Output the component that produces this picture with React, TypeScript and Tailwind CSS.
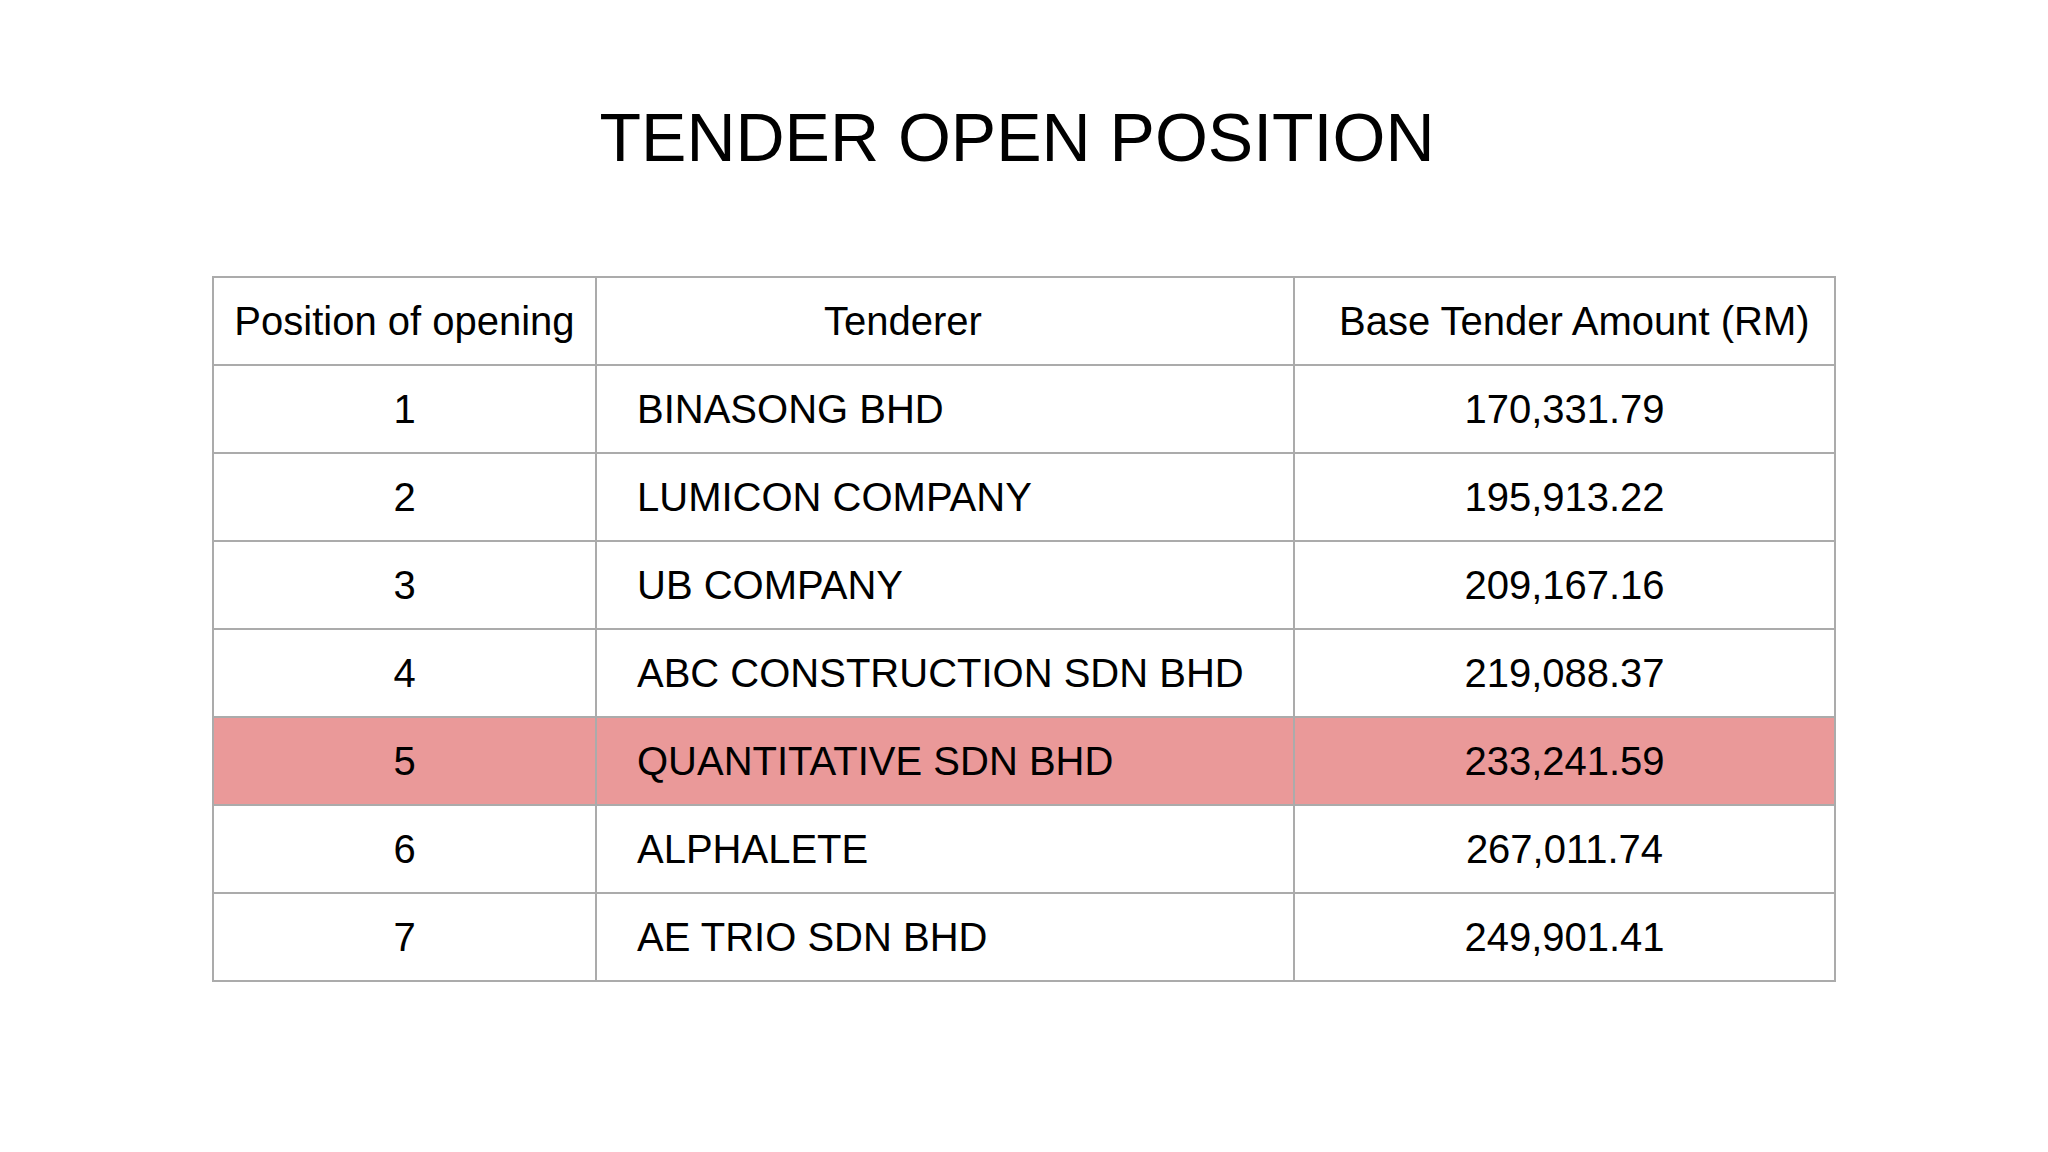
import React from "react";

const rows = [
  { pos: "1", name: "BINASONG BHD", amt: "170,331.79" },
  { pos: "2", name: "LUMICON COMPANY", amt: "195,913.22" },
  { pos: "3", name: "UB COMPANY", amt: "209,167.16" },
  { pos: "4", name: "ABC CONSTRUCTION SDN BHD", amt: "219,088.37" },
  { pos: "5", name: "QUANTITATIVE SDN BHD", amt: "233,241.59", hl: true },
  { pos: "6", name: "ALPHALETE", amt: "267,011.74" },
  { pos: "7", name: "AE TRIO SDN BHD", amt: "249,901.41" },
];

export default function App() {
  return (
    <div
      className="w-[2048px] h-[1152px] bg-white text-black flex flex-col items-center"
      style={{ fontFamily: '"Liberation Sans", Arial, sans-serif' }}
    >
      <h1 className="mt-[103px] h-[68px] pr-[14px] text-[68px] leading-none font-normal whitespace-nowrap">
        TENDER OPEN POSITION
      </h1>
      <div className="mt-[105px] w-[1624px] grid grid-cols-[383px_698px_541px] border-l-2 border-t-2 border-[#ababab] text-[40px] leading-none">
        <div className="h-[88px] border-r-2 border-b-2 border-[#ababab] flex items-center justify-center whitespace-nowrap">
          Position of opening
        </div>
        <div className="h-[88px] border-r-2 border-b-2 border-[#ababab] flex items-center pl-[227px] whitespace-nowrap">
          Tenderer
        </div>
        <div className="h-[88px] border-r-2 border-b-2 border-[#ababab] flex items-center pl-[44px] whitespace-nowrap">
          Base Tender Amount (RM)
        </div>
        {rows.map((r) => (
          <React.Fragment key={r.pos}>
            <div
              className={`h-[88px] border-r-2 border-b-2 border-[#ababab] flex items-center justify-center ${r.hl ? "bg-[#ea9999]" : ""}`}
            >
              {r.pos}
            </div>
            <div
              className={`h-[88px] border-r-2 border-b-2 border-[#ababab] flex items-center pl-[40px] whitespace-nowrap ${r.hl ? "bg-[#ea9999]" : ""}`}
            >
              {r.name}
            </div>
            <div
              className={`h-[88px] border-r-2 border-b-2 border-[#ababab] flex items-center justify-center ${r.hl ? "bg-[#ea9999]" : ""}`}
            >
              {r.amt}
            </div>
          </React.Fragment>
        ))}
      </div>
    </div>
  );
}
